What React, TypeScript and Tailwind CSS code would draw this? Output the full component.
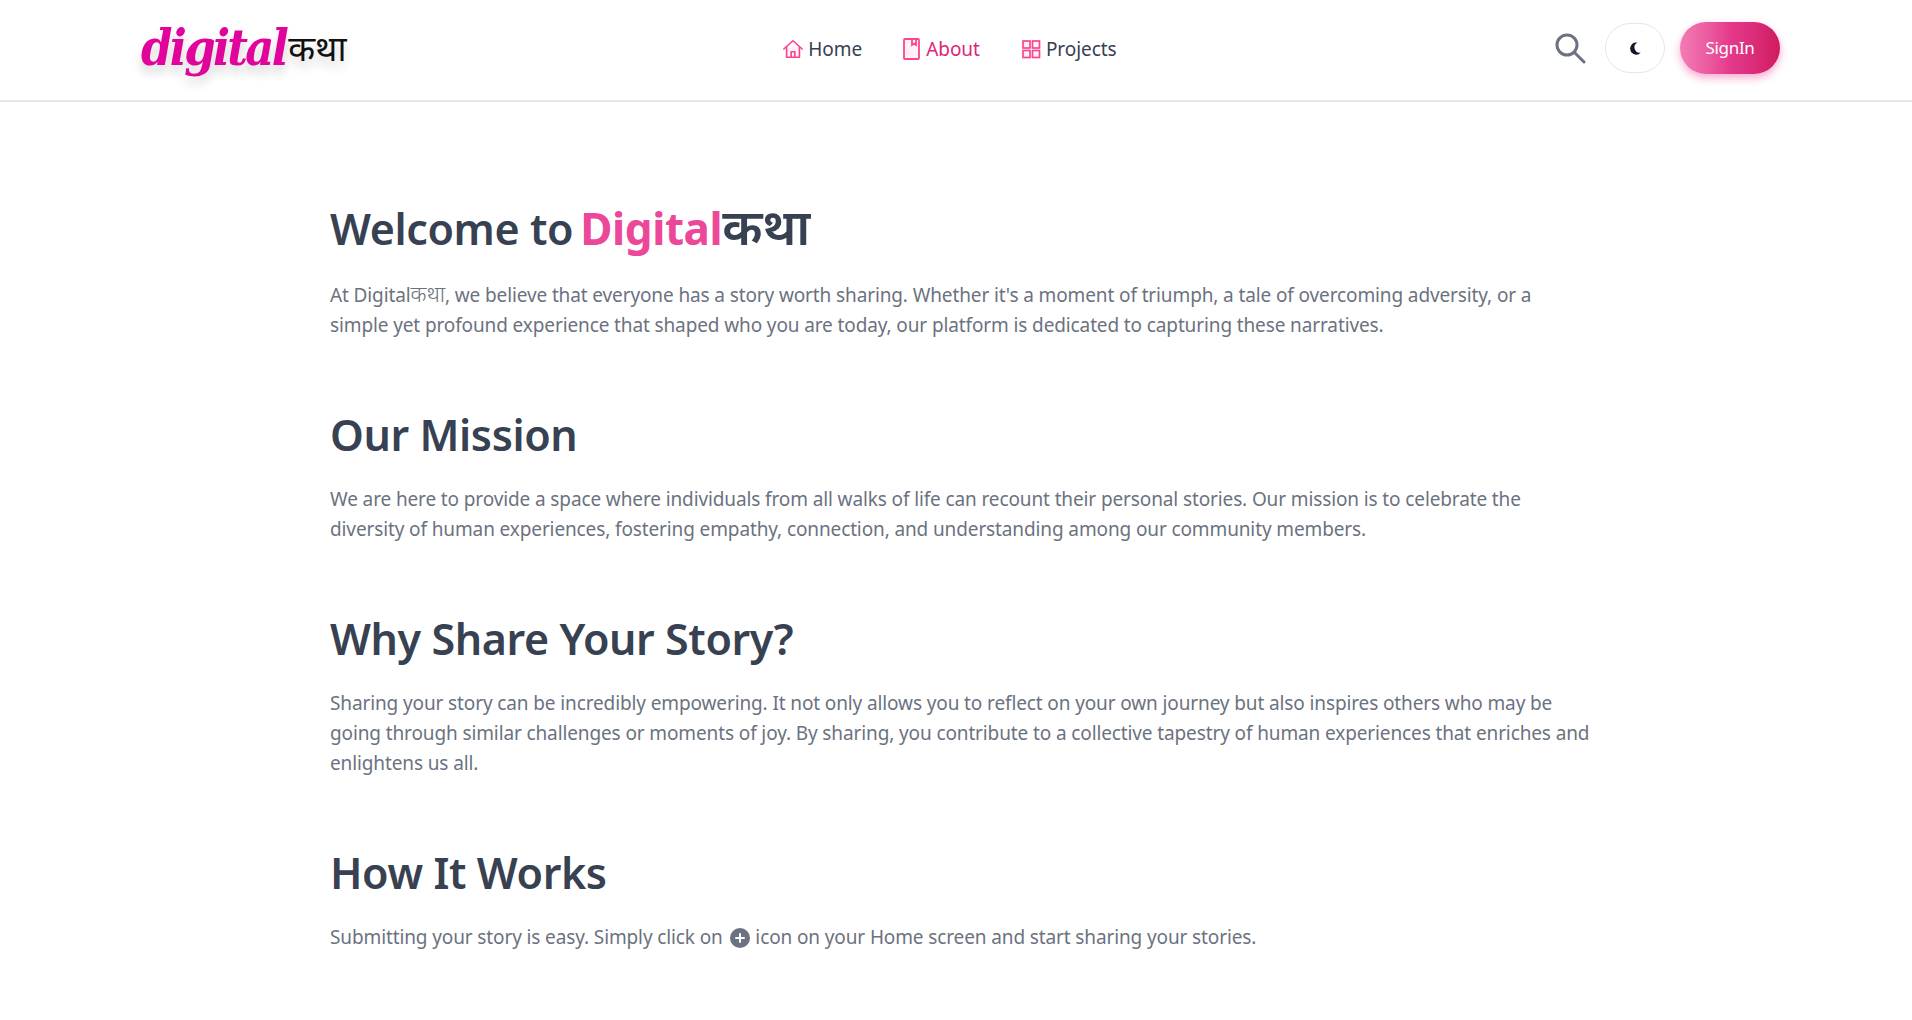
import React from "react";

const Section = ({ title, children }: { title: React.ReactNode; children: React.ReactNode }) => (
  <section>
    <h2 className="text-[43px] leading-[60px] font-semibold text-[#374151] tracking-[-0.4px]">{title}</h2>
    <p className="mt-[19px] text-[19px] leading-[30px] text-[#6b7280] tracking-[-0.12px]">{children}</p>
  </section>
);

export default function App() {
  return (
    <div className="min-h-screen bg-white font-['Noto_Sans','Noto_Sans_CJK_SC',sans-serif]">
      <header className="h-[102px] border-b-2 border-[#e5e7eb] flex items-center justify-between pl-[141px] pr-[132px] pb-[4px]">
        <div className="flex items-center w-[219px] [text-shadow:0_8px_10px_rgba(0,0,0,0.15)]">
          <span className="font-['DejaVu_Serif_Condensed','DejaVu_Serif',serif] italic font-bold text-[50px] leading-[60px] text-[#e0049c] tracking-[-2.7px]">digital</span>
          <span className="text-[35px] leading-[44px] text-[#111] ml-[2px]">कथा</span>
        </div>
        <nav className="flex items-center gap-[40px] text-[19px] tracking-[-0.05px] text-[#374151] mr-[17px] mt-[2px]">
          <a className="flex items-center gap-[4px]">
            <svg width="22" height="22" viewBox="0 0 24 24" fill="none" stroke="#f9468f" strokeWidth="1.8" strokeLinecap="round" strokeLinejoin="round"><path d="M2 12 12 3l10 9" /><path d="M5 10v11h14V10" fill="#fff1f6" /><path d="M10 21v-6h4v6" /></svg>
            Home
          </a>
          <a className="flex items-center gap-[4px] text-[#db2777]">
            <svg width="20" height="22" viewBox="0 0 20 22" fill="#fff1f6" stroke="#f9468f" strokeWidth="1.8"><rect x="2" y="1" width="15" height="20" rx="1" /><path d="M10 1v6l2-1.5L14 7V1" fill="none" /></svg>
            About
          </a>
          <a className="flex items-center gap-[4px]">
            <svg width="22" height="22" viewBox="0 0 22 22" fill="#fff1f6" stroke="#f9468f" strokeWidth="1.7"><rect x="3" y="3" width="7" height="7" /><rect x="12.5" y="3" width="7" height="7" /><rect x="3" y="12.5" width="7" height="7" /><rect x="12.5" y="12.5" width="7" height="7" /></svg>
            Projects
          </a>
        </nav>
        <div className="flex items-center">
          <svg width="32" height="32" viewBox="0 0 32 32" fill="none" stroke="#6b7280" strokeWidth="3" strokeLinecap="round" className="-ml-[2px]"><circle cx="13" cy="13" r="10" /><path d="M20.5 20.5 30 30" /></svg>
          <button className="ml-[19px] w-[60px] h-[50px] rounded-full border border-[#e5e7eb] bg-white flex items-center justify-center">
            <svg width="14" height="15" viewBox="0 0 14 14" fill="#111827"><path d="M9.5 1.2A6 6 0 1 0 12.8 11 5.2 5.2 0 0 1 9.5 1.2Z" /></svg>
          </button>
          <button className="ml-[15px] w-[100px] h-[52px] rounded-full bg-gradient-to-r from-[#f27cb6] via-[#e5398d] to-[#cf1a60] text-white text-[17px] tracking-[-0.3px] shadow-[0_4px_8px_rgba(236,72,153,0.45)]">SignIn</button>
        </div>
      </header>
      <main className="w-[1270px] ml-[330px] pt-[94px] flex flex-col gap-[65px]">
        <Section title={<>Welcome to<span className="ml-[7px] text-[#ec4899] font-bold text-[44px]">Digital</span><span className="text-[50px] font-semibold">कथा</span></>}>
          At Digital<span className="text-[22px] font-light">कथा</span>, we believe that everyone has a story worth sharing. Whether it's a moment of triumph, a tale of overcoming adversity, or a<br />simple yet profound experience that shaped who you are today, our platform is dedicated to capturing these narratives.
        </Section>
        <Section title="Our Mission">
          We are here to provide a space where individuals from all walks of life can recount their personal stories. Our mission is to celebrate the<br />diversity of human experiences, fostering empathy, connection, and understanding among our community members.
        </Section>
        <Section title="Why Share Your Story?">
          Sharing your story can be incredibly empowering. It not only allows you to reflect on your own journey but also inspires others who may be<br />going through similar challenges or moments of joy. By sharing, you contribute to a collective tapestry of human experiences that enriches and<br />enlightens us all.
        </Section>
        <Section title="How It Works">
          Submitting your story is easy. Simply click on{" "}
          <span className="inline-flex align-[1px] ml-[2px] mr-[1px] w-[20px] h-[20px] rounded-full bg-[#6b7280] text-white items-center justify-center">
            <svg width="10" height="10" viewBox="0 0 10 10" stroke="white" strokeWidth="2" strokeLinecap="round"><path d="M5 1v8M1 5h8" /></svg>
          </span>{" "}
          icon on your Home screen and start sharing your stories.
        </Section>
      </main>
    </div>
  );
}
